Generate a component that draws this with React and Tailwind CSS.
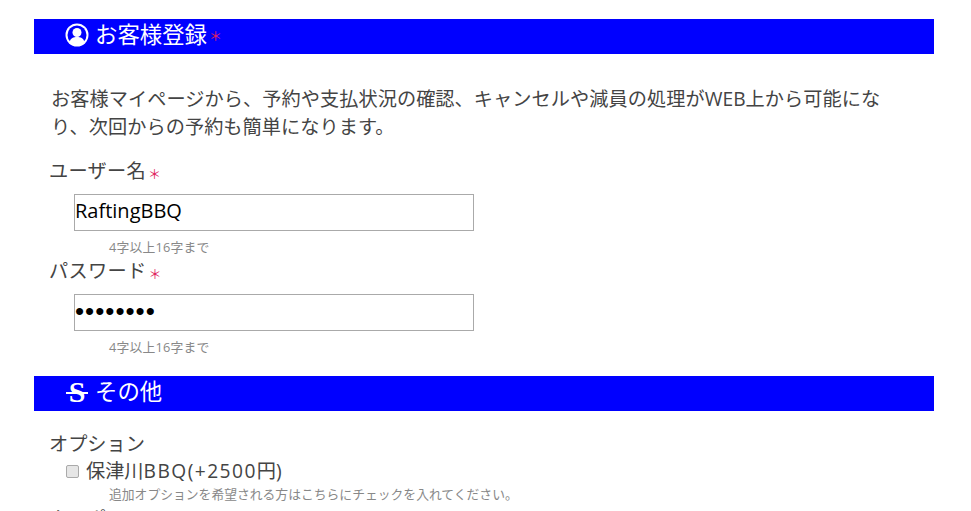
import { Fragment } from "react";

const FONT = "font-['Open_Sans','Noto_Sans_CJK_JP',sans-serif]";

function Required() {
  return <span className="relative top-[1px] ml-[2px] text-[13px] leading-none text-[#e0245e]">＊</span>;
}

function SectionBar({ icon, title, required }) {
  return (
    <div className="flex h-[35px] items-center bg-[#0000ff] pb-[3px] pl-[31px] text-white">
      <span className="flex w-[24px] justify-center">{icon}</span>
      <span className="ml-[6px] text-[22.400px] leading-none">{title}</span>
      {required && <Required />}
    </div>
  );
}

function UserIcon() {
  return (
    <svg width="24" height="24" viewBox="0 0 24 24">
      <circle cx="12" cy="12" r="11.500" fill="white" />
      <circle cx="12" cy="12" r="9.500" fill="#0000ff" />
      <circle cx="12" cy="9.500" r="4.500" fill="white" />
      <path d="M4.500 19c1-4 4-5 7.500-5s6.500 1 7.500 5c-2 2.500-4.500 4-7.500 4s-5.500-1.500-7.500-4z" fill="white" />
    </svg>
  );
}

// font-awesome style strikethrough: heavy serif S with a rule across it
function StrikeIcon() {
  return (
    <span className="relative flex h-[24px] w-[24px] items-center justify-center font-['Liberation_Serif',serif] text-[30px] font-bold leading-none">
      S
      <span className="absolute left-[1px] right-[1px] top-[12px] h-[2px] bg-white" />
    </span>
  );
}

function Field({ label, value, type, inputClass }) {
  return (
    <Fragment>
      <label className="block pl-[15px] text-[19.200px] leading-[28px] tracking-[0.3px] text-[#444]">
        {label}
        <Required />
      </label>
      <input
        type={type}
        defaultValue={value}
        className={`mt-[9px] ml-[40px] block h-[37px] w-[400px] border border-[#aaa] text-black outline-none ${inputClass}`}
      />
      <p className="ml-[75px] mt-[7px] mb-[1px] text-[12.800px] leading-[18px] tracking-[0.2px] text-[#888]">
        4字以上16字まで
      </p>
    </Fragment>
  );
}

export default function App() {
  return (
    <div className={`h-[511px] overflow-hidden bg-white ${FONT}`}>
      <div className="ml-[34px] w-[900px] pt-[19px]">
        <SectionBar icon={<UserIcon />} title="お客様登録" required />
        <p className="mt-[31px] w-[858px] pl-[17px] text-[19.200px] leading-[28px] tracking-[0.05px] text-[#444]">
          お客様マイページから、予約や支払状況の確認、キャンセルや減員の処理がWEB上から可能になり、次回からの予約も簡単になります。
        </p>
        <div className="mt-[16px]">
          <Field label="ユーザー名" value="RaftingBBQ" type="text" inputClass="pb-[5px] text-[20px]" />
          <Field
            label="パスワード"
            value="password"
            type="password"
            inputClass="pb-[3px] font-['Liberation_Sans',sans-serif] text-[26px] tracking-[1px]"
          />
        </div>
        <div className="mt-[20px]">
          <SectionBar icon={<StrikeIcon />} title="その他" />
        </div>
        <p className="mt-[19px] pl-[15px] text-[19.200px] leading-[28px] text-[#444]">オプション</p>
        <label className="flex h-[27px] items-center pb-[1px] pl-[32px] text-[19.200px] text-[#444]">
          <input
            type="checkbox"
            className="mr-[7px] h-[13px] w-[13px] appearance-none rounded-[2px] border border-[#aaa] bg-[#e6e6e6]"
          />
          <span>
            保津川<span className="tracking-[1.450px]">BBQ(+2500</span>円)
          </span>
        </label>
        <p className="ml-[75px] text-[12.800px] leading-[18px] text-[#888]">
          追加オプションを希望される方はこちらにチェックを入れてください。
        </p>
        <p className="mt-[2px] pl-[15px] text-[19.200px] leading-[28px] text-[#444]">クーポンコード</p>
      </div>
    </div>
  );
}
